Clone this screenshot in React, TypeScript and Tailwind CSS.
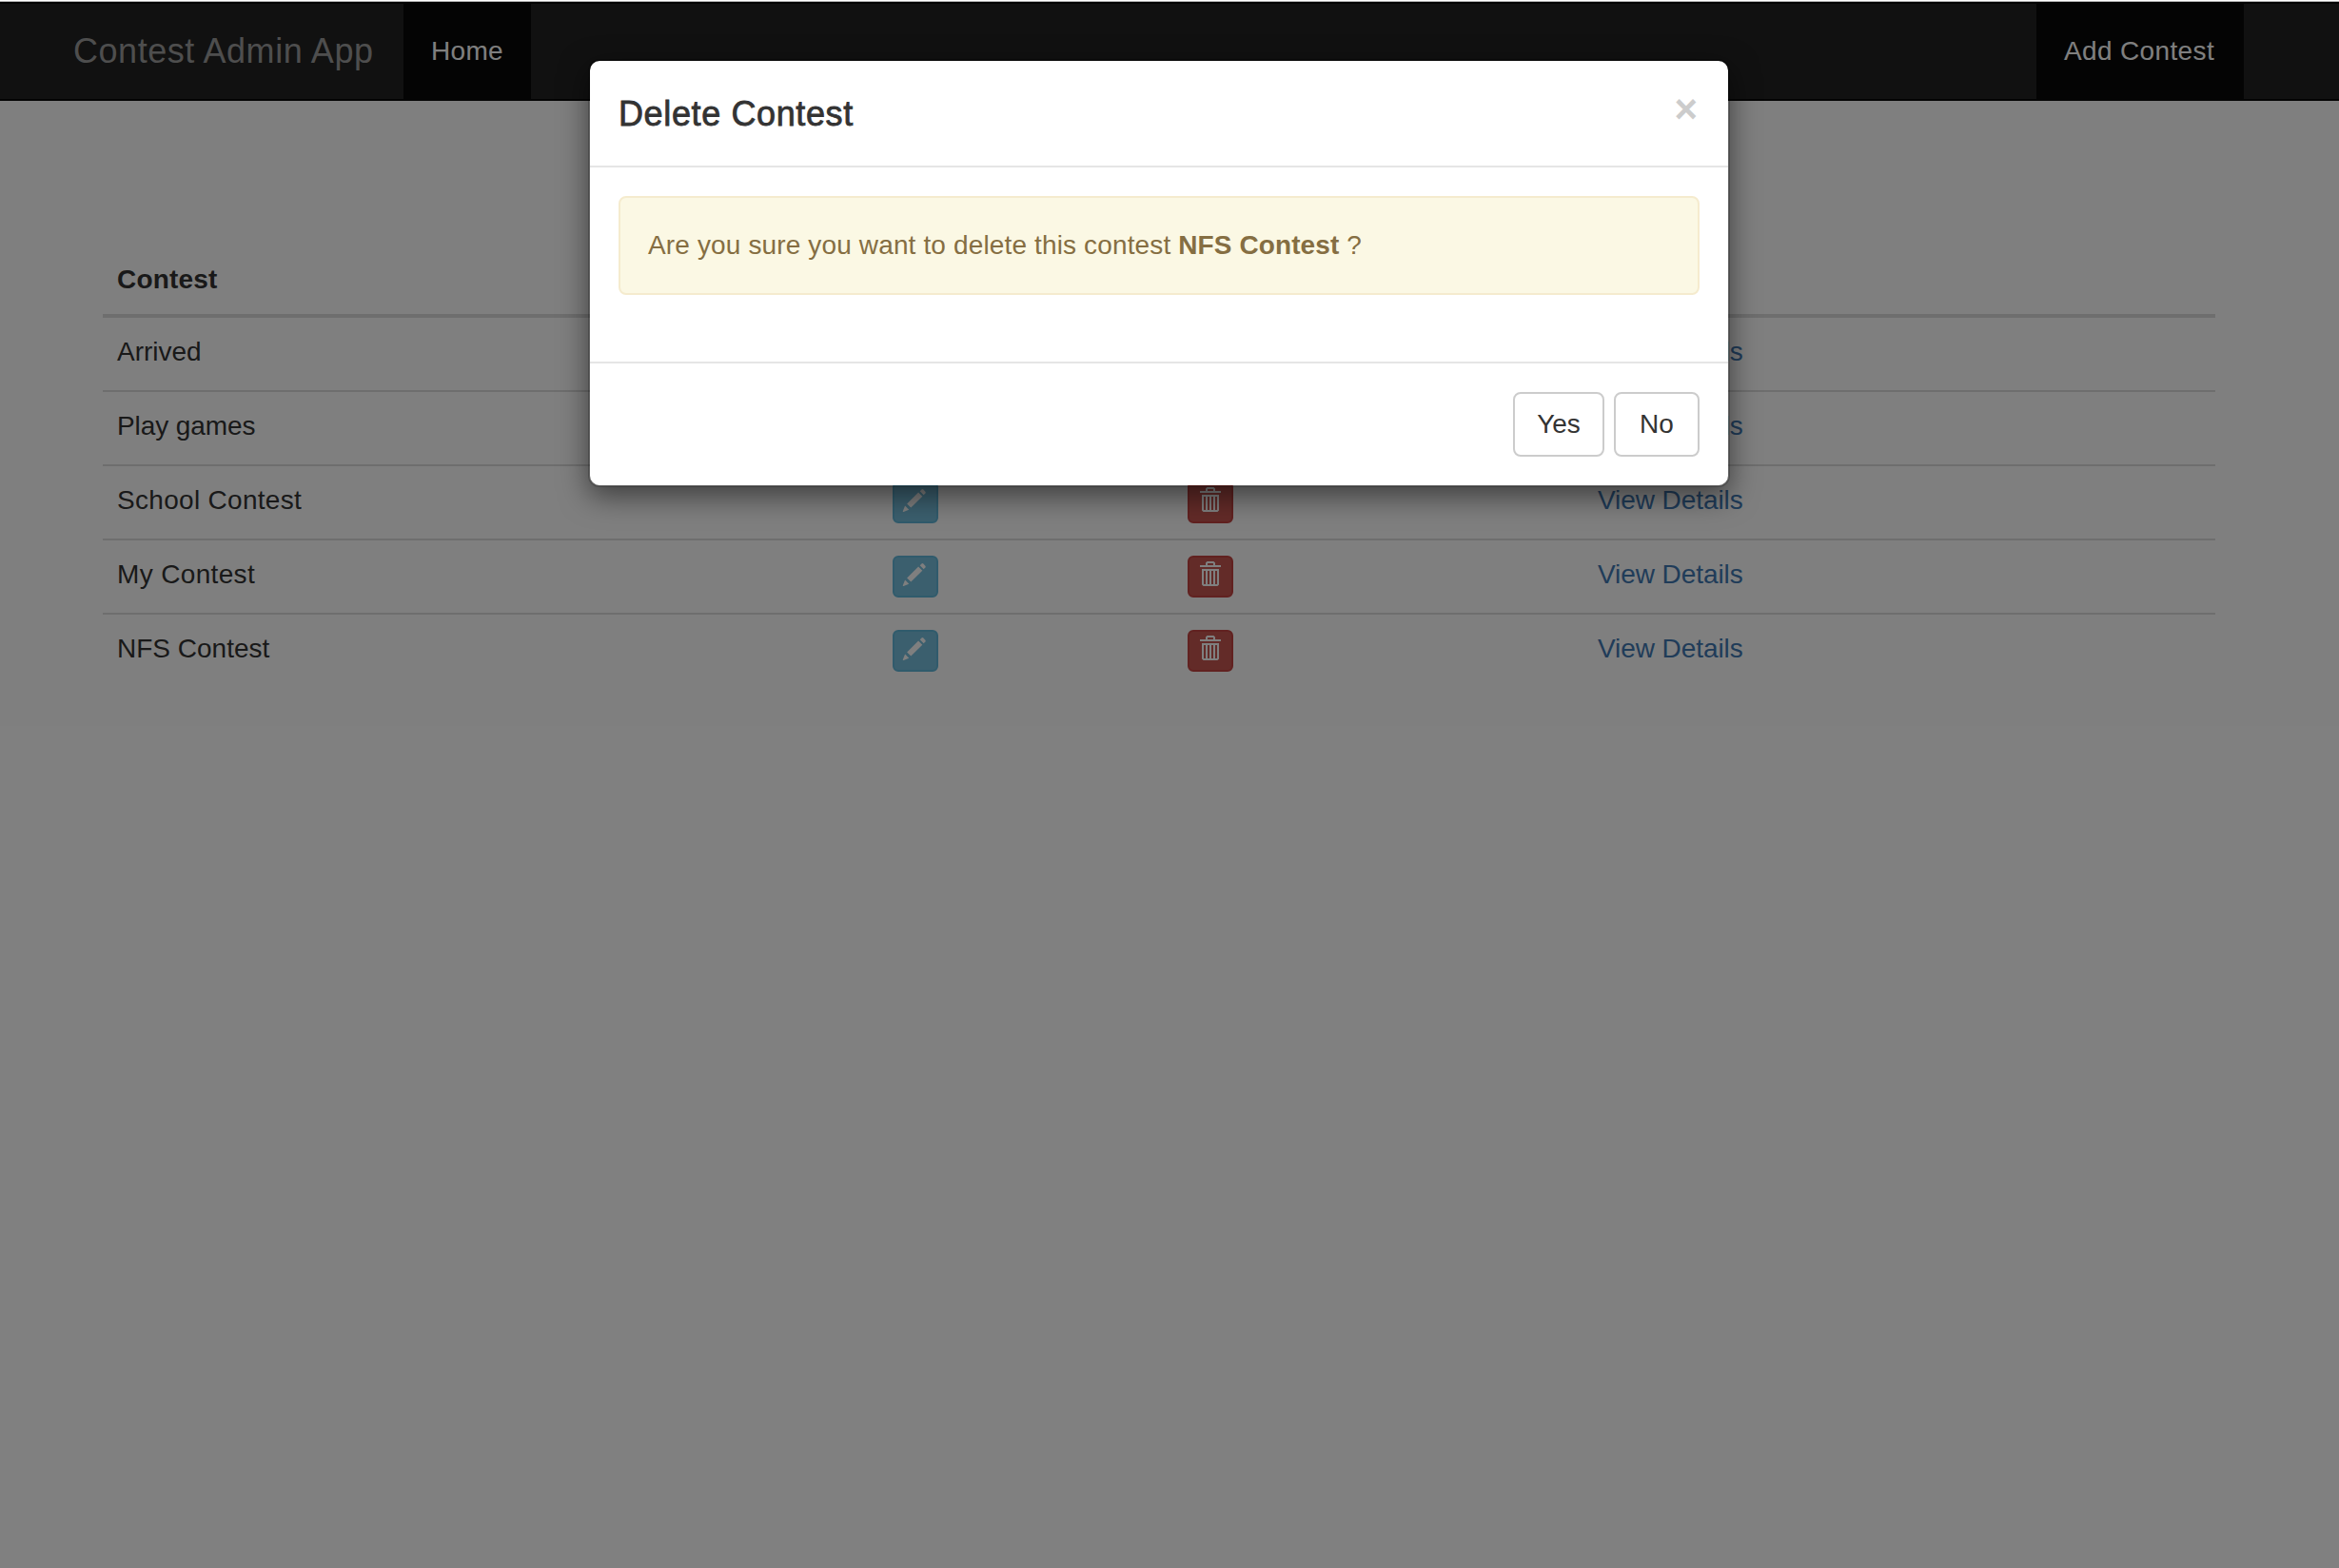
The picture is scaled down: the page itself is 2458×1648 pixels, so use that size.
const contests = ["Arrived", "Play games", "School Contest", "My Contest", "NFS Contest"];

const spacing: Record<string, string> = {
  "Play games": "tracking-[-0.1px]",
  "School Contest": "tracking-[0.3px]",
  "My Contest": "tracking-[0.35px]",
};

function PencilIcon() {
  return (
    <svg className="block h-[28px] w-[28px]" viewBox="0 0 28 28" fill="#fff">
      <path d="M18.7 4.2 L20.6 2.4 Q21.4 1.8 22.2 2.5 L24.4 4.7 Q25.1 5.5 24.5 6.3 L22.7 8.2 Z" />
      <path d="M17.1 5.6 L21.3 9.8 L9.3 21.6 L5.1 17.4 Z" />
      <path d="M3.1 19.6 L7.2 23.7 L1.5 26 Q0.5 26.2 0.8 25.2 Z" />
    </svg>
  );
}

function TrashIcon() {
  return (
    <svg className="block h-[28px] w-[28px]" viewBox="0 0 28 28" fill="none" stroke="#fff" strokeWidth="2">
      <path d="M2 5H24M9 5V2L10 1H16L17 2V5" />
      <path d="M5 9V24L6 25H20L21 24V9Z" />
      <path d="M9 9V25M13 9V25M17 9V25" />
    </svg>
  );
}

function Navbar() {
  return (
    <nav className="flex h-[104px] w-full justify-between border-y-2 border-[#080808] bg-[#222] pr-[100px] pl-[76px]">
      <div className="flex">
        <a className="w-[348px] pt-[30px] pl-px text-[36px] leading-[40px] tracking-[0.55px] whitespace-nowrap text-[#9d9d9d]">
          Contest Admin App
        </a>
        <a className="w-[134px] bg-[#080808] pt-[30px] pl-[29px] text-[28px] leading-[40px] tracking-[0.3px] text-white">
          Home
        </a>
      </div>
      <a className="w-[218px] bg-[#080808] pt-[30px] pl-[29px] text-[28px] leading-[40px] tracking-[0.36px] whitespace-nowrap text-white">
        Add Contest
      </a>
    </nav>
  );
}

function ContestTable() {
  return (
    <section className="mt-[168px] ml-[108px] w-[2220px] text-[28px] leading-[40px] text-[#333]">
      <div className="h-[60px] border-b-4 border-[#ddd] pl-[15px] font-bold tracking-[0.2px]">Contest</div>
      {contests.map((name, i) => (
        <div
          key={name}
          className={
            i === 0
              ? "grid h-[76px] grid-cols-[814px_310px_431px_1fr]"
              : "grid h-[78px] grid-cols-[814px_310px_431px_1fr] border-t-2 border-[#ddd]"
          }
        >
          <div className={`pt-[16px] pl-[15px] ${spacing[name] ?? ""}`}>{name}</div>
          <div className="pt-[16px] pl-[16px]">
            <button className="flex h-[44px] w-[48px] items-start rounded-[6px] border-2 border-[#60b6d8] bg-[#76bedc] pt-[4px] pl-[8px]">
              <PencilIcon />
            </button>
          </div>
          <div className="pt-[16px] pl-[16px]">
            <button className="flex h-[44px] w-[48px] items-start rounded-[6px] border-2 border-[#c24340] bg-[#c65650] pt-[4px] pl-[9px]">
              <TrashIcon />
            </button>
          </div>
          <a className="pt-[16px] pl-[16px] tracking-[-0.08px] text-[#4178b2]">View Details</a>
        </div>
      ))}
    </section>
  );
}

function DeleteModal() {
  return (
    <div className="w-[1200px] rounded-[12px] border-2 border-black/20 bg-white bg-clip-padding text-[28px] leading-[40px] text-[#333] shadow-[0_10px_30px_rgba(0,0,0,0.5)]">
      <header className="flex h-[112px] items-start justify-between border-b-2 border-[#e5e5e5] px-[30px] pt-[30px]">
        <h4 className="pt-px text-[36px] leading-[50px] tracking-[0.62px] [-webkit-text-stroke:0.8px_#333]">
          Delete Contest
        </h4>
        <button className="mr-[2px] text-[42px] leading-[42px] font-bold text-[#ccc]">×</button>
      </header>
      <div className="h-[204px] p-[30px]">
        <p className="h-[104px] rounded-[8px] border-2 border-[#f5ebce] bg-[#fbf8e4] px-[29px] pt-[30px] tracking-[0.14px] text-[#856e42]">
          Are you sure you want to delete this contest <strong className="tracking-[0.1px]">NFS Contest</strong> ?
        </p>
      </div>
      <footer className="flex h-[130px] justify-end gap-[10px] border-t-2 border-[#e5e5e5] px-[30px] pt-[30px]">
        <button className="flex h-[68px] w-[96px] items-center justify-center rounded-[8px] border-2 border-[#ccc] bg-white">
          Yes
        </button>
        <button className="flex h-[68px] w-[90px] items-center justify-center rounded-[8px] border-2 border-[#ccc] bg-white">
          No
        </button>
      </footer>
    </div>
  );
}

export default function App() {
  return (
    <div className="relative h-[1648px] w-[2458px] overflow-hidden bg-white font-['Liberation_Sans',Arial,sans-serif]">
      <div className="h-px bg-white" />
      <div className="h-px bg-[#b5b5b5]" />
      <Navbar />
      <ContestTable />
      <div className="absolute inset-x-0 top-[2px] bottom-0 flex items-start justify-center bg-black/50 pt-[60px] pr-[22px]">
        <DeleteModal />
      </div>
    </div>
  );
}
